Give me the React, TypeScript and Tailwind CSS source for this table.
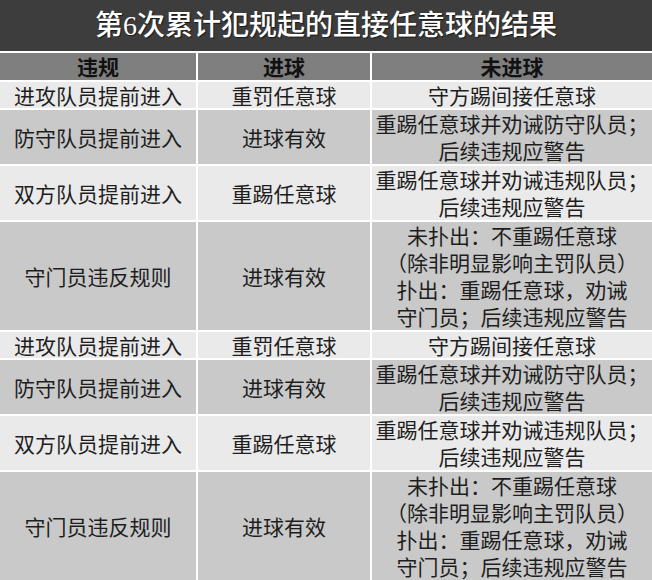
import React from 'react';

type Row = {
  foul: string;
  goal: string;
  miss: string[];
  tone: 'light' | 'dark';
  h: string;
};

const ROWS: Row[] = [
  { foul: '进攻队员提前进入', goal: '重罚任意球', miss: ['守方踢间接任意球'], tone: 'light', h: 'h-[26px]' },
  { foul: '防守队员提前进入', goal: '进球有效', miss: ['重踢任意球并劝诫防守队员；', '后续违规应警告'], tone: 'dark', h: 'h-[54px]' },
  { foul: '双方队员提前进入', goal: '重踢任意球', miss: ['重踢任意球并劝诫违规队员；', '后续违规应警告'], tone: 'light', h: 'h-[54px]' },
  {
    foul: '守门员违反规则',
    goal: '进球有效',
    miss: ['未扑出：不重踢任意球', '（除非明显影响主罚队员）', '扑出：重踢任意球，劝诫', '守门员；后续违规应警告'],
    tone: 'dark',
    h: 'h-[108px]'
  }
];

const App: React.FC = () => {
  const rows = [...ROWS, ...ROWS];
  return (
    <div className="w-[652px] h-[580px] overflow-hidden bg-white font-['Noto_Sans_CJK_SC',sans-serif] text-[#1e1e1e]">
      <div className="h-[51px] bg-[#3d3d3d] flex items-center justify-center text-white text-[28px] font-medium leading-none font-['Liberation_Serif','Noto_Sans_CJK_SC',serif] [text-shadow:1px_1px_1px_rgba(0,0,0,0.6)]">
        第6次累计犯规起的直接任意球的结果
      </div>
      <div className="mt-[2px] grid grid-cols-[196px_172px_280px] gap-[2px] bg-white">
        {['违规', '进球', '未进球'].map((label) => (
          <div key={label} className="h-[27px] bg-[#7f7f7f] flex items-center justify-center text-[21px] font-bold text-[#111] leading-none">
            {label}
          </div>
        ))}
        {rows.map((row, i) => {
          const bg = row.tone === 'light' ? 'bg-[#eaeaea]' : 'bg-[#c9c9c9]';
          const cell = `${row.h} ${bg} flex items-center justify-center text-center text-[21px] leading-[27px] whitespace-nowrap`;
          return (
            <React.Fragment key={i}>
              <div className={cell}>{row.foul}</div>
              <div className={cell}>{row.goal}</div>
              <div className={cell}>
                <div>
                  {row.miss.map((line) => (
                    <div key={line}>{line}</div>
                  ))}
                </div>
              </div>
            </React.Fragment>
          );
        })}
      </div>
    </div>
  );
};

export default App;
